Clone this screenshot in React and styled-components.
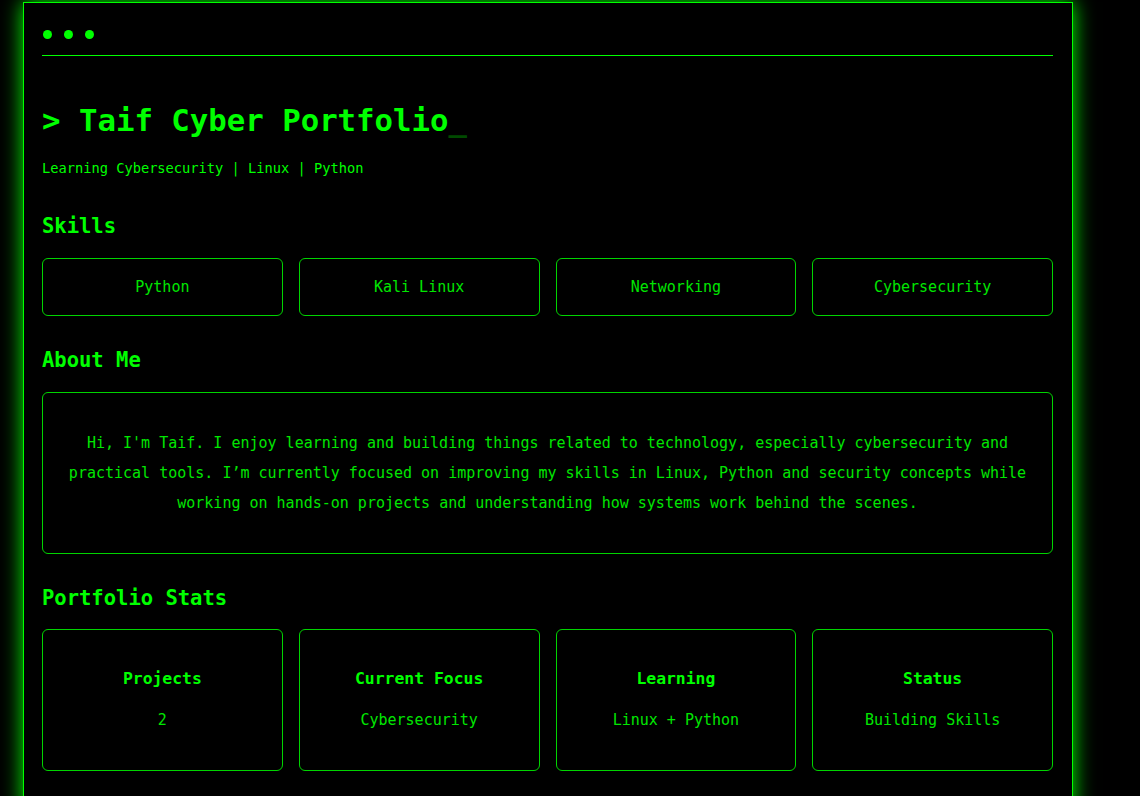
import React from "react";
import styled, { createGlobalStyle } from "styled-components";

const GlobalStyle = createGlobalStyle`
  html, body {
    margin: 0;
    padding: 0;
    background: #000;
  }
  body {
    font-family: "DejaVu Sans Mono", "Liberation Mono", monospace;
    color: #00ff00;
  }
`;

const Terminal = styled.div`
  box-sizing: border-box;
  width: 1050px;
  margin: 2px 0 0 23px;
  padding: 0 19px 40px 18px;
  border: 1px solid #00ff00;
  background: #000;
  box-shadow: 0 0 20px #00ff00;
`;

const TopBar = styled.div`
  display: flex;
  gap: 12px;
  padding: 27px 0 16px 1px;
  border-bottom: 1px solid #00ff00;
`;

const Dot = styled.span`
  width: 9px;
  height: 9px;
  border-radius: 50%;
  background: #00ff00;
`;

const Title = styled.h1`
  margin: 45px 0 0;
  font-size: 30.7px;
  line-height: 40px;
  font-weight: bold;
  color: #00ff00;
`;

const Cursor = styled.span`
  color: #004a00;
`;

const Subtitle = styled.p`
  margin: 18px 0 0;
  font-size: 13.7px;
  line-height: 18px;
  color: #00ff00;
`;

const SectionTitle = styled.h2`
  margin: ${(p) => p.$top}px 0 ${(p) => p.$bottom}px;
  font-size: 20.5px;
  line-height: 26px;
  font-weight: bold;
  color: #00ff00;
`;

const Grid = styled.div`
  display: grid;
  grid-template-columns: repeat(4, 1fr);
  gap: 16px;
`;

const SkillCard = styled.div`
  height: 56px;
  display: flex;
  align-items: center;
  justify-content: center;
  border: 1px solid #00d400;
  border-radius: 6px;
  font-size: 15px;
  color: #00e600;
`;

const AboutBox = styled.div`
  padding: 35px 20px;
  border: 1px solid #00d400;
  border-radius: 6px;
  text-align: center;
  font-size: 15px;
  line-height: 30px;
  color: #00e600;
`;

const StatCard = styled.div`
  padding: 39px 10px 40px;
  border: 1px solid #00d400;
  border-radius: 6px;
  text-align: center;
`;

const StatLabel = styled.div`
  font-size: 16.4px;
  line-height: 20px;
  font-weight: bold;
  color: #00ff00;
`;

const StatValue = styled.div`
  margin-top: 21px;
  font-size: 15px;
  line-height: 20px;
  color: #00e600;
`;

const skills = ["Python", "Kali Linux", "Networking", "Cybersecurity"];

const stats = [
  { label: "Projects", value: "2" },
  { label: "Current Focus", value: "Cybersecurity" },
  { label: "Learning", value: "Linux + Python" },
  { label: "Status", value: "Building Skills" },
];

const App = () => {
  return (
    <>
      <GlobalStyle />
      <Terminal>
        <TopBar>
          <Dot />
          <Dot />
          <Dot />
        </TopBar>

        <Title>
          &gt; Taif Cyber Portfolio<Cursor>_</Cursor>
        </Title>
        <Subtitle>Learning Cybersecurity | Linux | Python</Subtitle>

        <SectionTitle $top={36} $bottom={19}>
          Skills
        </SectionTitle>
        <Grid>
          {skills.map((skill) => (
            <SkillCard key={skill}>{skill}</SkillCard>
          ))}
        </Grid>

        <SectionTitle $top={31} $bottom={19}>
          About Me
        </SectionTitle>
        <AboutBox>
          Hi, I'm Taif. I enjoy learning and building things related to
          technology, especially cybersecurity and practical tools. I’m
          currently focused on improving my skills in Linux, Python and
          security concepts while working on hands-on projects and
          understanding how systems work behind the scenes.
        </AboutBox>

        <SectionTitle $top={31} $bottom={18}>
          Portfolio Stats
        </SectionTitle>
        <Grid>
          {stats.map((stat) => (
            <StatCard key={stat.label}>
              <StatLabel>{stat.label}</StatLabel>
              <StatValue>{stat.value}</StatValue>
            </StatCard>
          ))}
        </Grid>
      </Terminal>
    </>
  );
};

export default App;
